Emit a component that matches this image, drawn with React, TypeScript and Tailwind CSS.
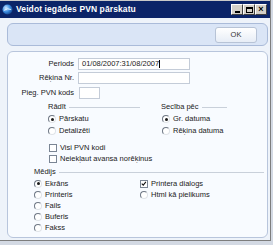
import React from "react";

const Radio = ({ checked }: { checked?: boolean }) => (
  <span className="relative inline-block w-[8px] h-[8px] rounded-full border border-t-[#6f7885] border-l-[#6f7885] border-r-[#dfe3e8] border-b-[#dfe3e8] bg-white shrink-0">
    {checked && (
      <span className="absolute left-[1.5px] top-[1.5px] w-[3px] h-[3px] rounded-full bg-[#1a1a1a]" />
    )}
  </span>
);

const Check = ({ checked }: { checked?: boolean }) => (
  <span className="relative inline-block w-[8px] h-[8px] border border-[#7a8594] bg-white shrink-0">
    {checked && (
      <svg viewBox="0 0 8 8" className="absolute left-0 top-0 w-[6px] h-[6px]">
        <path d="M1 3.5 L3 5.5 L6.5 1.2" stroke="#111" strokeWidth="1.4" fill="none" />
      </svg>
    )}
  </span>
);

const RadioRow = ({ label, checked }: { label: string; checked?: boolean }) => (
  <div className="flex items-center gap-[3px] h-[12px]">
    <Radio checked={checked} />
    <span>{label}</span>
  </div>
);

const CheckRow = ({ label, checked }: { label: string; checked?: boolean }) => (
  <div className="flex items-center gap-[3px] h-[11px]">
    <Check checked={checked} />
    <span>{label}</span>
  </div>
);

const GroupHead = ({ label, w }: { label: string; w: string }) => (
  <div className={`flex items-center h-[10px] ${w}`}>
    <span className="leading-none">{label}</span>
    <span className="flex-1 ml-[3px] h-px bg-[#c9d0da]" />
  </div>
);

export default function App() {
  return (
    <div className="w-[273px] h-[245px] bg-[#d3d9e3] font-['Liberation_Sans',sans-serif] text-[7.5px] text-[#1a1a1a]">
      <div className="w-[271px] h-[241px] flex flex-col border-r border-b border-[#7d7d7d] bg-[#eef3fa]">
        {/* title bar */}
        <div className="h-[18px] bg-[#0b2468] flex items-center pl-[2px] pr-[3px] border-t border-[#c9c9c9]">
          <svg viewBox="0 0 12 12" className="w-[11px] h-[11px] shrink-0">
            <defs>
              <radialGradient id="g" cx="35%" cy="35%" r="70%">
                <stop offset="0%" stopColor="#cfe6ff" />
                <stop offset="55%" stopColor="#3d8de0" />
                <stop offset="100%" stopColor="#12458f" />
              </radialGradient>
            </defs>
            <circle cx="6" cy="6" r="5.5" fill="url(#g)" />
            <path d="M2 7 Q6 4 10 6" stroke="#e8f4ff" strokeWidth="1" fill="none" />
          </svg>
          <span className="ml-[3px] text-white font-bold text-[8.5px] tracking-[0.1px]">
            Veidot iegādes PVN pārskatu
          </span>
          <div className="ml-auto flex gap-0">
            {["_", "□", "×"].map((c, i) => (
              <span
                key={i}
                className="w-[12px] h-[11px] bg-[#d4d0c8] border border-t-white border-l-white border-r-[#404040] border-b-[#404040] flex items-center justify-center text-black text-[9px] font-bold leading-none"
              >
                {i === 0 ? (
                  <span className="block w-[5px] h-[2px] bg-black mt-[5px]" />
                ) : i === 1 ? (
                  <span className="block w-[7px] h-[6px] border border-black border-t-2" />
                ) : (
                  <span className="-mt-px">{c}</span>
                )}
              </span>
            ))}
          </div>
        </div>

        {/* body */}
        <div className="flex-1 flex flex-col pl-[7px] pr-[2px] pt-[5px] pb-[2px]">
          <div className="h-[23px] rounded-[6px] border border-[#aabbd9] bg-[#dae5f6] flex items-center justify-end pr-[10px]">
            <div className="w-[42px] h-[16px] rounded-[3px] border border-[#b7c3d6] bg-gradient-to-b from-white to-[#e7edf6] flex items-center justify-center text-[7.5px] text-[#333]">
              OK
            </div>
          </div>

          <div className="mt-[5px] flex-1 rounded-[6px] border border-[#b8c5dc] bg-[#f8fbff] flex flex-col pt-[6px]">
            {/* fields */}
            <div className="flex items-center h-[12px]">
              <span className="w-[66px] text-right">Periods</span>
              <div className="ml-[4px] w-[112px] h-[12px] bg-white border border-[#c4ccd8] flex items-center pl-[3px]">
                01/08/2007:31/08/2007<span className="w-px h-[8px] bg-black" />
              </div>
            </div>
            <div className="flex items-center h-[12px] mt-[2px]">
              <span className="w-[66px] text-right">Rēķina Nr.</span>
              <div className="ml-[4px] w-[112px] h-[12px] bg-white border border-[#c4ccd8]" />
            </div>
            <div className="flex items-center h-[12px] mt-[3px]">
              <span className="w-[66px] text-right">Pieg. PVN kods</span>
              <div className="ml-[5px] w-[21px] h-[12px] bg-white border border-[#c4ccd8]" />
            </div>

            {/* Rādīt / Secība */}
            <div className="flex mt-[3px] pl-[40px]">
              <div className="w-[113px] flex flex-col">
                <GroupHead label="Rādīt" w="w-[92px]" />
                <div className="mt-px">
                  <RadioRow label="Pārskatu" checked />
                  <RadioRow label="Detalizēti" />
                </div>
              </div>
              <div className="flex flex-col">
                <GroupHead label="Secība pēc" w="w-[66px]" />
                <div className="mt-px pl-px">
                  <RadioRow label="Gr. datuma" checked />
                  <RadioRow label="Rēķina datuma" />
                </div>
              </div>
            </div>

            <div className="flex flex-col mt-[5px] pl-[41px]">
              <CheckRow label="Visi PVN kodi" />
              <CheckRow label="Neiekļaut avansa norēķinus" />
            </div>

            {/* Mēdijs */}
            <div className="flex flex-col mt-[3px] pl-[26px]">
              <GroupHead label="Mēdijs" w="w-[230px]" />
              <div className="flex mt-px">
                <div className="w-[106px] flex flex-col">
                  {[
                    ["Ekrāns", true],
                    ["Printeris", false],
                    ["Fails", false],
                    ["Buferis", false],
                    ["Fakss", false],
                  ].map(([l, c]) => (
                    <div key={l as string} className="flex items-center gap-[3px] h-[11px]">
                      <Radio checked={c as boolean} />
                      <span>{l as string}</span>
                    </div>
                  ))}
                </div>
                <div className="flex flex-col">
                  <CheckRow label="Printera dialogs" checked />
                  <div className="flex items-center gap-[3px] h-[11px]">
                    <Radio />
                    <span>Html kā pielikums</span>
                  </div>
                </div>
              </div>
            </div>
          </div>
        </div>
      </div>
    </div>
  );
}
